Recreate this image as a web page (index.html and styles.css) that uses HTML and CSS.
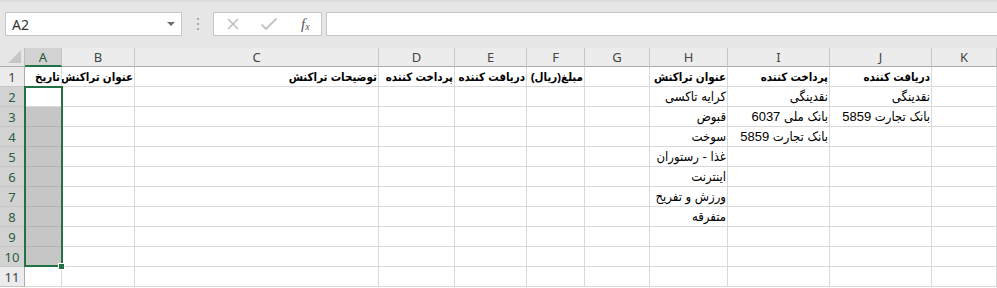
FILE: index.html
```html
<!DOCTYPE html>
<html lang="fa">
<head>
  <meta charset="UTF-8">
  <meta name="viewport" content="width=device-width, initial-scale=1.0">
  <title>Transactions sheet</title>
  <link rel="stylesheet" href="styles.css">
</head>
<body>
  <div class="formula-bar">
    <div class="name-box">
      <span class="cell-ref">A2</span>
      <svg class="drop" width="8" height="5" viewBox="0 0 8 5"><path d="M0 0 L8 0 L4 4 Z" fill="#6d6d6d"/></svg>
    </div>
    <div class="grip"><i></i><i></i><i></i></div>
    <div class="fx-buttons">
      <svg class="btn-x" width="14" height="14" viewBox="0 0 14 14"><path d="M2 2 L12 12 M12 2 L2 12" stroke="#b9b9b9" stroke-width="1.4" fill="none"/></svg>
      <svg class="btn-ok" width="18" height="14" viewBox="0 0 18 14"><path d="M1.5 7.5 L6 12 L16.5 1.5" stroke="#c2c2c2" stroke-width="1.8" fill="none"/></svg>
      <span class="fx">f<sub>x</sub></span>
    </div>
    <div class="formula-input"></div>
  </div>

  <div class="sheet">
    <!-- column headers -->
    <div class="corner">
      <svg width="13" height="13" viewBox="0 0 13 13"><path d="M13 0 L13 13 L0 13 Z" fill="#c6c6c6"/></svg>
    </div>
    <div class="col-head selected">A</div>
    <div class="col-head">B</div>
    <div class="col-head">C</div>
    <div class="col-head">D</div>
    <div class="col-head">E</div>
    <div class="col-head">F</div>
    <div class="col-head">G</div>
    <div class="col-head">H</div>
    <div class="col-head">I</div>
    <div class="col-head">J</div>
    <div class="col-head">K</div>

    <!-- row 1 -->
    <div class="row-head">1</div>
    <div class="cell bold">تاریخ</div>
    <div class="cell bold">عنوان تراکنش</div>
    <div class="cell bold">توضیحات تراکنش</div>
    <div class="cell bold">پرداخت کننده</div>
    <div class="cell bold">دریافت کننده</div>
    <div class="cell bold">مبلغ(ریال)</div>
    <div class="cell"></div>
    <div class="cell bold">عنوان تراکنش</div>
    <div class="cell bold">پرداخت کننده</div>
    <div class="cell bold">دریافت کننده</div>
    <div class="cell"></div>

    <!-- row 2 -->
    <div class="row-head selected">2</div>
    <div class="cell"></div>
    <div class="cell"></div>
    <div class="cell"></div>
    <div class="cell"></div>
    <div class="cell"></div>
    <div class="cell"></div>
    <div class="cell"></div>
    <div class="cell">کرایه تاکسی</div>
    <div class="cell">نقدینگی</div>
    <div class="cell">نقدینگی</div>
    <div class="cell"></div>

    <!-- row 3 -->
    <div class="row-head selected">3</div>
    <div class="cell picked"></div>
    <div class="cell"></div>
    <div class="cell"></div>
    <div class="cell"></div>
    <div class="cell"></div>
    <div class="cell"></div>
    <div class="cell"></div>
    <div class="cell">قبوض</div>
    <div class="cell">بانک ملی 6037</div>
    <div class="cell">بانک تجارت 5859</div>
    <div class="cell"></div>

    <!-- row 4 -->
    <div class="row-head selected">4</div>
    <div class="cell picked"></div>
    <div class="cell"></div>
    <div class="cell"></div>
    <div class="cell"></div>
    <div class="cell"></div>
    <div class="cell"></div>
    <div class="cell"></div>
    <div class="cell">سوخت</div>
    <div class="cell">بانک تجارت 5859</div>
    <div class="cell"></div>
    <div class="cell"></div>

    <!-- row 5 -->
    <div class="row-head selected">5</div>
    <div class="cell picked"></div>
    <div class="cell"></div>
    <div class="cell"></div>
    <div class="cell"></div>
    <div class="cell"></div>
    <div class="cell"></div>
    <div class="cell"></div>
    <div class="cell">غذا - رستوران</div>
    <div class="cell"></div>
    <div class="cell"></div>
    <div class="cell"></div>

    <!-- row 6 -->
    <div class="row-head selected">6</div>
    <div class="cell picked"></div>
    <div class="cell"></div>
    <div class="cell"></div>
    <div class="cell"></div>
    <div class="cell"></div>
    <div class="cell"></div>
    <div class="cell"></div>
    <div class="cell">اینترنت</div>
    <div class="cell"></div>
    <div class="cell"></div>
    <div class="cell"></div>

    <!-- row 7 -->
    <div class="row-head selected">7</div>
    <div class="cell picked"></div>
    <div class="cell"></div>
    <div class="cell"></div>
    <div class="cell"></div>
    <div class="cell"></div>
    <div class="cell"></div>
    <div class="cell"></div>
    <div class="cell">ورزش و تفریح</div>
    <div class="cell"></div>
    <div class="cell"></div>
    <div class="cell"></div>

    <!-- row 8 -->
    <div class="row-head selected">8</div>
    <div class="cell picked"></div>
    <div class="cell"></div>
    <div class="cell"></div>
    <div class="cell"></div>
    <div class="cell"></div>
    <div class="cell"></div>
    <div class="cell"></div>
    <div class="cell">متفرقه</div>
    <div class="cell"></div>
    <div class="cell"></div>
    <div class="cell"></div>

    <!-- row 9 -->
    <div class="row-head selected">9</div>
    <div class="cell picked"></div>
    <div class="cell"></div>
    <div class="cell"></div>
    <div class="cell"></div>
    <div class="cell"></div>
    <div class="cell"></div>
    <div class="cell"></div>
    <div class="cell"></div>
    <div class="cell"></div>
    <div class="cell"></div>
    <div class="cell"></div>

    <!-- row 10 -->
    <div class="row-head selected">10</div>
    <div class="cell picked"></div>
    <div class="cell"></div>
    <div class="cell"></div>
    <div class="cell"></div>
    <div class="cell"></div>
    <div class="cell"></div>
    <div class="cell"></div>
    <div class="cell"></div>
    <div class="cell"></div>
    <div class="cell"></div>
    <div class="cell"></div>

    <!-- row 11 -->
    <div class="row-head">11</div>
    <div class="cell"></div>
    <div class="cell"></div>
    <div class="cell"></div>
    <div class="cell"></div>
    <div class="cell"></div>
    <div class="cell"></div>
    <div class="cell"></div>
    <div class="cell"></div>
    <div class="cell"></div>
    <div class="cell"></div>
    <div class="cell"></div>

    <!-- selection A2:A10 -->
    <div class="selection"></div>
    <div class="fill-handle"></div>
  </div>
</body>
</html>
```

FILE: styles.css
```css
body {
  margin: 0;
  background: #fff;
  font-family: "Liberation Sans", "DejaVu Sans", sans-serif;
  overflow: hidden;
}

/* formula bar */
.formula-bar {
  height: 48px;
  box-sizing: border-box;
  border-top: 2px solid #dcdcdc;
  background: #e6e6e6;
  display: flex;
  align-items: flex-start;
  padding: 10px 0 0 5px;
}

.name-box {
  width: 177px;
  height: 24px;
  box-sizing: border-box;
  background: #fff;
  border: 1px solid #c6c6c6;
  display: flex;
  align-items: center;
  justify-content: space-between;
  padding: 0 6px 0 6px;
}

.cell-ref {
  font-family: "Noto Sans", sans-serif;
  font-size: 14px;
  color: #333;
}

.grip {
  width: 31px;
  height: 24px;
  display: flex;
  flex-direction: column;
  align-items: center;
  justify-content: center;
  gap: 3px;
}

.grip i {
  width: 2px;
  height: 2px;
  background: #a9a9a9;
}

.fx-buttons {
  width: 109px;
  height: 24px;
  box-sizing: border-box;
  background: #fff;
  border: 1px solid #c6c6c6;
  display: flex;
  align-items: center;
  padding: 0 0 0 12px;
}

.btn-x {
  margin-right: 20px;
}

.btn-ok {
  margin-right: 23px;
}

.fx {
  font-family: "Liberation Serif", serif;
  font-style: italic;
  font-size: 15px;
  color: #555;
}

.fx sub {
  font-size: 10px;
  vertical-align: -1px;
}

.formula-input {
  flex: 1;
  height: 24px;
  box-sizing: border-box;
  margin-left: 4px;
  background: #fff;
  border: 1px solid #c6c6c6;
  border-right: none;
}

/* sheet grid */
.sheet {
  position: relative;
  display: grid;
  grid-template-columns: 25px 37px 73px 244px 76px 72px 58px 65px 78px 102px 102px 65px;
  grid-template-rows: 19px;
  grid-auto-rows: 20px;
}

.corner {
  background: #e6e6e6;
  border-right: 1px solid #bfbfbf;
  border-bottom: 1px solid #ababab;
  box-sizing: border-box;
  display: flex;
  align-items: flex-end;
  justify-content: flex-end;
  padding: 0 3px 3px 0;
}

.col-head {
  background: #ececec;
  border-right: 1px solid #c6c6c6;
  border-bottom: 1px solid #ababab;
  box-sizing: border-box;
  text-align: center;
  font-family: "Noto Sans", sans-serif;
  font-size: 13px;
  line-height: 18px;
  color: #444;
}

.col-head.selected {
  background: #d2d2d2;
  border-bottom: 2px solid #217346;
  color: #1f5a38;
}

.row-head {
  background: #ececec;
  border-right: 1px solid #ababab;
  border-bottom: 1px solid #c6c6c6;
  box-sizing: border-box;
  text-align: center;
  font-family: "Noto Sans", sans-serif;
  font-size: 13px;
  line-height: 20px;
  color: #444;
}

.row-head.selected {
  background: #d2d2d2;
  color: #2d5b40;
}

.cell {
  border-right: 1px solid #d9d9d9;
  border-bottom: 1px solid #d9d9d9;
  box-sizing: border-box;
  direction: rtl;
  text-align: right;
  white-space: nowrap;
  overflow: hidden;
  padding: 0 1px 0 0;
  font-family: "Liberation Sans", "DejaVu Sans Condensed", "DejaVu Sans", sans-serif;
  font-stretch: condensed;
  font-size: 13px;
  line-height: 20px;
  color: #000;
}

.cell.bold {
  font-weight: bold;
  font-size: 11.5px;
}

.cell.picked {
  background: #c6c6c6;
  border-color: #b4b4b4;
}

.selection {
  position: absolute;
  left: 24px;
  top: 38px;
  width: 39px;
  height: 181px;
  box-sizing: border-box;
  border: 2px solid #217346;
}

.fill-handle {
  position: absolute;
  left: 58px;
  top: 215px;
  width: 5px;
  height: 5px;
  background: #217346;
  border: 1px solid #fff;
}
```
